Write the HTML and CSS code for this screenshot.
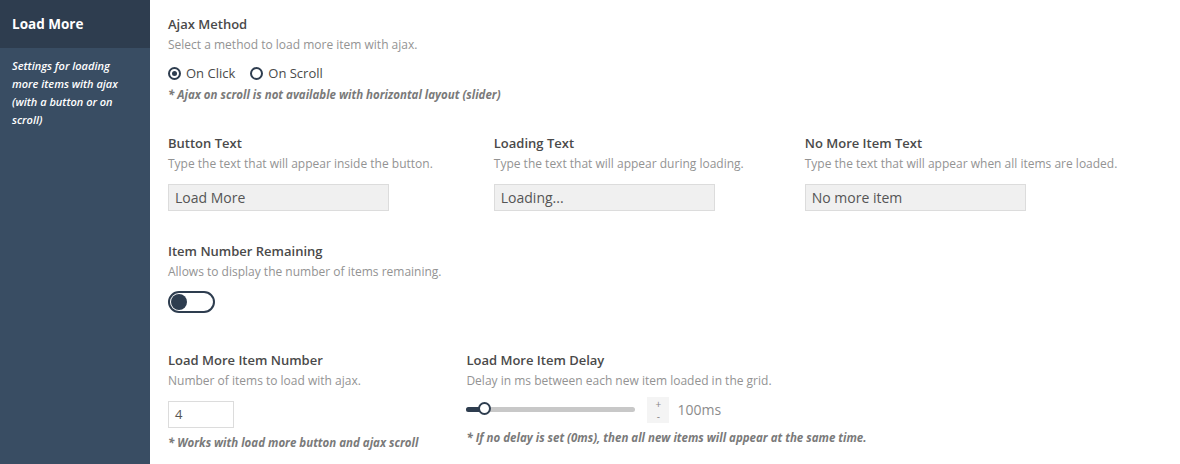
FILE: index.html
```html
<!DOCTYPE html>
<html>
<head>
<meta charset="utf-8">
<link rel="stylesheet" href="styles.css">
</head>
<body>
<div class="page">
  <aside class="sidebar">
    <div class="side-head">Load More</div>
    <div class="side-desc">Settings for loading more items with ajax (with a button or on scroll)</div>
  </aside>
  <main class="main">
    <section class="field">
      <div class="label">Ajax Method</div>
      <div class="desc">Select a method to load more item with ajax.</div>
      <div class="radios">
        <span class="radio checked"><span class="dot"></span>On Click</span>
        <span class="radio"><span class="dot"></span>On Scroll</span>
      </div>
      <div class="note">* Ajax on scroll is not available with horizontal layout (slider)</div>
    </section>

    <section class="row row-text">
      <div class="field">
        <div class="label">Button Text</div>
        <div class="desc">Type the text that will appear inside the button.</div>
        <div class="input">Load More</div>
      </div>
      <div class="field">
        <div class="label">Loading Text</div>
        <div class="desc">Type the text that will appear during loading.</div>
        <div class="input">Loading...</div>
      </div>
      <div class="field">
        <div class="label">No More Item Text</div>
        <div class="desc">Type the text that will appear when all items are loaded.</div>
        <div class="input">No more item</div>
      </div>
    </section>

    <section class="field sec-toggle">
      <div class="label">Item Number Remaining</div>
      <div class="desc">Allows to display the number of items remaining.</div>
      <div class="toggle"><span class="knob"></span></div>
    </section>

    <section class="row row-num">
      <div class="field">
        <div class="label">Load More Item Number</div>
        <div class="desc">Number of items to load with ajax.</div>
        <div class="num">4</div>
        <div class="note note-tight">* Works with load more button and ajax scroll</div>
      </div>
      <div class="field">
        <div class="label">Load More Item Delay</div>
        <div class="desc">Delay in ms between each new item loaded in the grid.</div>
        <div class="slider-row">
          <div class="slider"><div class="fill"></div><div class="thumb"></div></div>
          <div class="stepper"><span class="step">+</span><span class="step">-</span></div>
          <span class="value">100ms</span>
        </div>
        <div class="note note-tight">* If no delay is set (0ms), then all new items will appear at the same time.</div>
      </div>
    </section>
  </main>
</div>
</body>
</html>
```

FILE: styles.css
```css
html, body {
  margin: 0;
  padding: 0;
  background: #fff;
  font-family: "Open Sans", "Liberation Sans", sans-serif;
}
.page {
  display: flex;
  width: 1180px;
  height: 464px;
  overflow: hidden;
}
.sidebar {
  width: 150px;
  flex: none;
  background: #394d63;
  color: #fff;
}
.side-head {
  height: 48px;
  background: #2e3d4f;
  font-size: 13.5px;
  font-weight: 700;
  line-height: 48px;
  padding-left: 12px;
}
.side-desc {
  padding: 9px 12px 0 12px;
  font-size: 11px;
  font-style: italic;
  font-weight: 600;
  line-height: 18px;
}
.main {
  flex: 1;
  padding: 14px 0 0 18px;
}
.label {
  font-size: 13px;
  font-weight: 600;
  color: #4a4a4a;
  line-height: 20px;
  margin-bottom: 1px;
}
.desc {
  font-size: 12px;
  color: #939393;
  line-height: 20px;
}
.radios {
  display: flex;
  gap: 15px;
  margin-top: 8px;
  height: 20px;
  align-items: center;
}
.radio {
  display: flex;
  align-items: center;
  gap: 5px;
  font-size: 13px;
  color: #4a4a4a;
}
.radio .dot {
  width: 9px;
  height: 9px;
  border: 2px solid #2e3d4f;
  border-radius: 50%;
  position: relative;
}
.radio.checked .dot::after {
  content: "";
  position: absolute;
  left: 2px;
  top: 2px;
  width: 5px;
  height: 5px;
  border-radius: 50%;
  background: #2e3d4f;
}
.note {
  font-size: 11.5px;
  font-style: italic;
  font-weight: 700;
  color: #7a7a7a;
  line-height: 20px;
  margin-top: 2px;
}
.row {
  display: flex;
}
.row-text {
  margin-top: 28px;
  gap: 61px;
}
.input {
  margin-top: 10px;
  width: 213px;
  height: 25px;
  border: 1px solid #dcdcdc;
  background: #f0f0f0;
  padding-left: 6px;
  font-size: 14px;
  line-height: 25px;
  color: #555;
}
.sec-toggle {
  margin-top: 30px;
}
.toggle {
  margin-top: 9px;
  width: 43px;
  height: 18px;
  border: 2px solid #2e3d4f;
  border-radius: 12px;
  position: relative;
}
.toggle .knob {
  position: absolute;
  left: 1px;
  top: 1px;
  width: 16px;
  height: 16px;
  border-radius: 50%;
  background: #2e3d4f;
}
.row-num {
  margin-top: 37px;
  gap: 48px;
}
.num {
  margin-top: 10px;
  width: 58px;
  height: 25px;
  border: 1px solid #dcdcdc;
  background: #fff;
  padding-left: 6px;
  font-size: 13px;
  line-height: 25px;
  color: #555;
}
.note-tight {
  margin-top: 5px;
}
.slider-row {
  display: flex;
  align-items: center;
  margin-top: 5px;
  height: 27px;
}
.slider {
  width: 169px;
  height: 5px;
  border-radius: 3px;
  background: #c8c8c8;
  position: relative;
}
.slider .fill {
  width: 18px;
  height: 5px;
  border-radius: 3px;
  background: #2e3d4f;
}
.slider .thumb {
  position: absolute;
  left: 12px;
  top: -5px;
  width: 9px;
  height: 9px;
  border: 2px solid #2e3d4f;
  border-radius: 50%;
  background: #fff;
}
.stepper {
  margin-left: 12px;
  width: 22px;
  height: 26px;
  background: #f4f4f4;
  display: flex;
  flex-direction: column;
  align-items: center;
  justify-content: center;
  gap: 2px;
  color: #888;
}
.step {
  font-size: 10px;
  line-height: 10px;
  height: 10px;
}
.value {
  margin-left: 8px;
  font-size: 14px;
  color: #8c8c8c;
}
```
